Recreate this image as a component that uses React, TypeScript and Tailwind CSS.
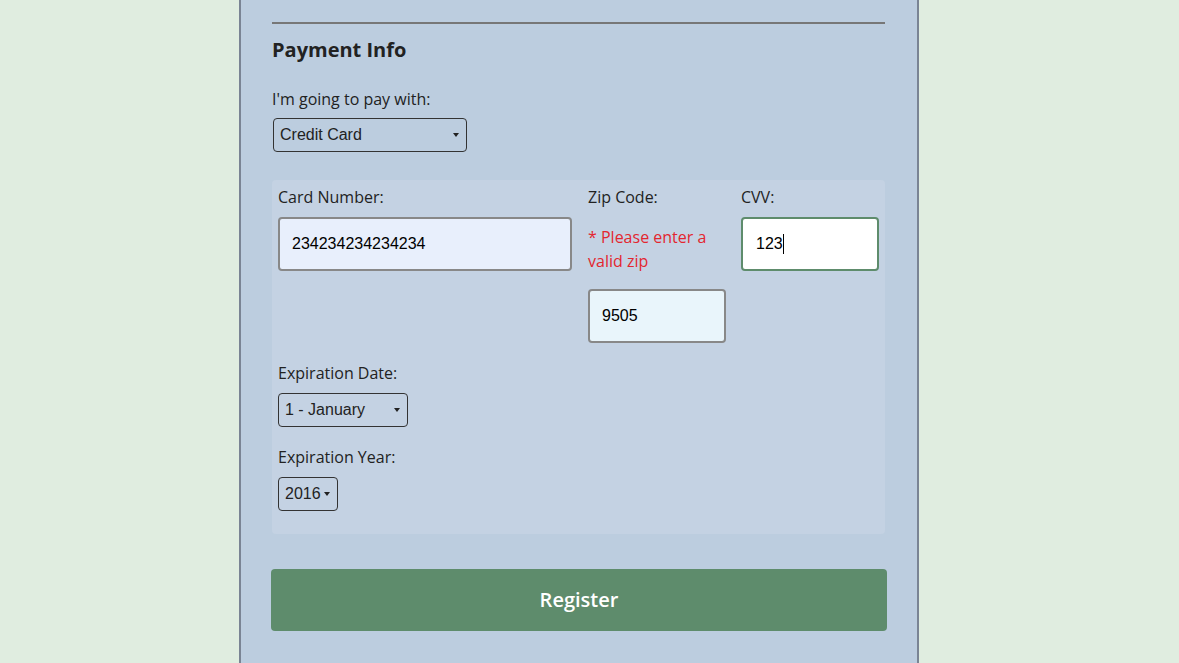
import React from "react";

const comic = "font-['Comic_Sans_MS','Open_Sans',sans-serif]";
const arial = "font-['Liberation_Sans',Arial,sans-serif]";

const Select: React.FC<{ value: string; options: string[]; className: string }> = ({
  value,
  options,
  className,
}) => (
  <div className={`relative ${className}`}>
    <select
      defaultValue={value}
      className={`h-[34px] w-full appearance-none rounded-[4px] border border-[#333] bg-transparent pl-[6px] text-[16px] text-[#222] ${arial} outline-none`}
    >
      {options.map((o) => (
        <option key={o}>{o}</option>
      ))}
    </select>
    <span className="pointer-events-none absolute right-[8px] top-[15px] h-0 w-0 border-x-[3px] border-t-[4px] border-x-transparent border-t-[#222]" />
  </div>
);

export default function App() {
  return (
    <div className={`min-h-[663px] w-full bg-[#e0ede0] ${comic}`}>
      <div className="ml-[239px] min-h-[663px] w-[680px] border-x-2 border-[#7a8494] bg-[#bccddf] px-[31px] pt-[22px] pb-[32px] text-[#222]">
        <div className="h-[2px] w-[613px] bg-[#777]" />

        <h2 className="mt-[12px] text-[20px] font-bold leading-[28px]">Payment Info</h2>

        <label className="mt-[23px] block text-[16px] leading-[24px]">I'm going to pay with:</label>
        <Select
          value="Credit Card"
          options={["Credit Card", "PayPal", "Bitcoin"]}
          className="mt-[7px] ml-[1px] w-[194px]"
        />

        <div className="mt-[28px] w-[613px] rounded-[4px] bg-[#c4d2e3] px-[6px] pt-[5px] pb-[23px]">
          <div className="flex gap-[16px]">
            <div className="w-[294px]">
              <label className="block text-[16px] leading-[24px]">Card Number:</label>
              <input
                defaultValue="234234234234234"
                className={`mt-[8px] h-[54px] w-full rounded-[4px] border-2 border-[#888] bg-[#e8effc] px-[12px] text-[16px] text-black ${arial} outline-none`}
              />
            </div>
            <div className="w-[138px]">
              <label className="block text-[16px] leading-[24px]">Zip Code:</label>
              <p className="mt-[16px] text-[16px] leading-[24px] text-[#e3262f]">* Please enter a valid zip</p>
              <input
                defaultValue="9505"
                className={`mt-[16px] h-[54px] w-full rounded-[4px] border-2 border-[#888] bg-[#e9f5fb] px-[12px] text-[16px] text-black ${arial} outline-none`}
              />
            </div>
            <div className="ml-[-1px] w-[138px]">
              <label className="block text-[16px] leading-[24px]">CVV:</label>
              <div className="relative mt-[8px]">
                <input
                  defaultValue="123"
                  className={`h-[54px] w-full rounded-[4px] border-2 border-[#5e8c6c] bg-white pl-[13px] pr-[12px] text-[16px] text-black ${arial} outline-none`}
                />
                <span className="pointer-events-none absolute left-[42px] top-[17px] h-[20px] w-px bg-black" />
              </div>
            </div>
          </div>

          <label className="mt-[18px] block text-[16px] leading-[24px]">Expiration Date:</label>
          <Select
            value="1 - January"
            options={["1 - January", "2 - February", "3 - March"]}
            className="mt-[8px] w-[130px]"
          />

          <label className="mt-[18px] block text-[16px] leading-[24px]">Expiration Year:</label>
          <Select value="2016" options={["2016", "2017", "2018"]} className="mt-[8px] w-[60px]" />
        </div>

        <button className="mt-[35px] -ml-[1px] h-[62px] w-[616px] rounded-[4px] bg-[#5e8c6c] text-[20px] font-semibold text-white">
          Register
        </button>
      </div>
    </div>
  );
}
